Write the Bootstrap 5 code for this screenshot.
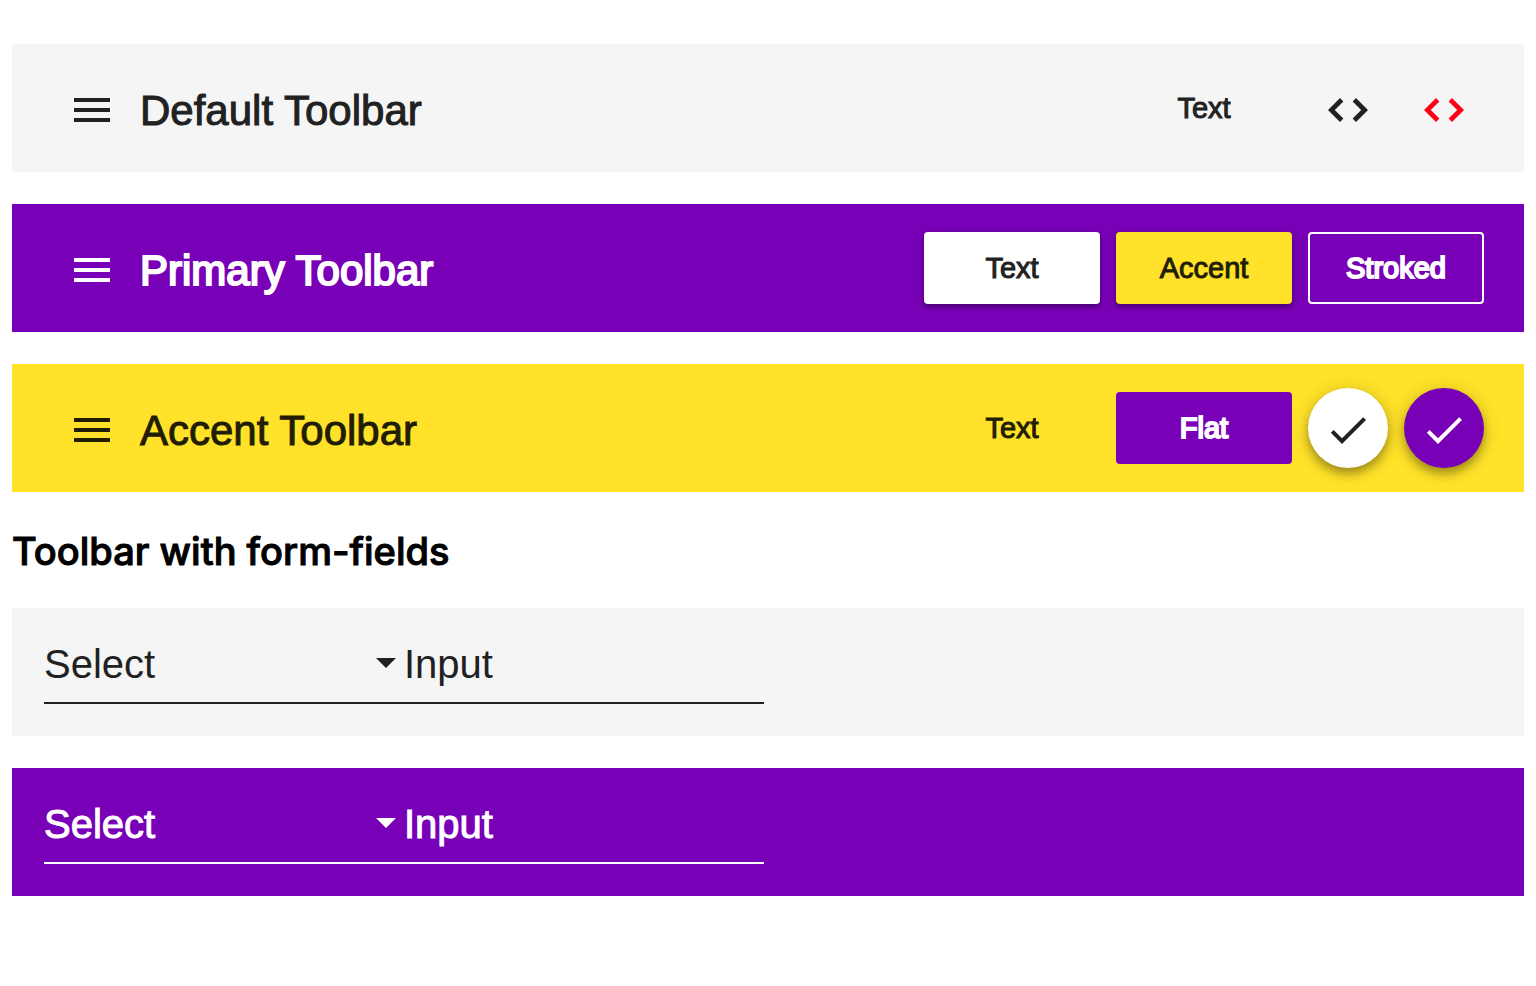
<!DOCTYPE html>
<html lang="en">
<head>
<meta charset="utf-8">
<meta name="viewport" content="width=device-width, initial-scale=1">
<title>Toolbars</title>
<link href="https://cdn.jsdelivr.net/npm/bootstrap@5.3.0/dist/css/bootstrap.min.css" rel="stylesheet">
<style>
  :root { --ink: #212121; --primary: #7800b6; --accent: #ffe229; --surface: #f5f5f5; }
  body { font-family: "Liberation Sans", Arial, sans-serif; background: #fff; color: var(--ink); }
  .page { padding-top: 44px; padding-bottom: 44px; }
  .toolbar { min-height: 128px; padding: 0 32px; color: var(--ink); background: var(--surface); }
  .toolbar-primary { background: var(--primary); color: #fff; }
  .toolbar-accent { background: var(--accent); color: #211d05; }
  .toolbar-stack { display: grid; gap: 32px; }
  .toolbar-title { font-size: 42px; line-height: 48px; font-weight: 400; margin: 6px 0 0; -webkit-text-stroke: 1px currentColor; }
  .tool-btn { min-width: 176px; height: 72px; padding: 0 32px; border-radius: 4px; border: 2px solid transparent;
    font-size: 29px; line-height: 40px; color: inherit; -webkit-text-stroke: 1px currentColor; }
  .tool-btn.raised { box-shadow: 0 3px 4px rgba(0,0,0,.3), 0 1px 8px rgba(0,0,0,.16); }
  .fill-white { background: #fff; color: var(--ink); }
  .fill-accent { background: var(--accent); color: #211d05; }
  .fill-primary { background: var(--primary); color: #fff; }
  .tool-btn.stroked { border-color: #fff; }
  .toolbar-primary .toolbar-title, .tool-btn.stroked, .tool-btn.fill-primary { -webkit-text-stroke-width: 2px; }
  .icon-btn { width: 80px; height: 80px; padding: 4px 0 0; border: 0; border-radius: 50%; color: inherit;
    display: inline-flex; align-items: center; justify-content: center; }
  .icon-btn svg { width: 48px; height: 48px; fill: currentColor; }
  .icon-btn.fill-white { color: var(--ink); }
  .icon-btn.fill-primary { color: #fff; }
  .icon-btn.warn { color: #ff0015; }
  .icon-btn.fab { box-shadow: 0 6px 10px rgba(0,0,0,.3), 0 2px 20px rgba(0,0,0,.14); }
  .section-title { font-family: Inter, "Liberation Sans", sans-serif; font-size: 38px; line-height: 48px; font-weight: 500; color: #000; margin: 35px 0 33px;
    -webkit-text-stroke: 1px currentColor; }
  .fields { width: 720px; border-bottom: 2px solid currentColor; }
  .field { height: 64px; border: 0; border-radius: 0; padding: 0 0 12px; background: none; color: inherit; font-size: 40px; line-height: 48px;
    width: 100%; appearance: none; outline-offset: 2px; }
  .field option { color: var(--ink); }
  .field::placeholder { color: inherit; opacity: 1; }
  .toolbar-primary .field { -webkit-text-stroke: 1px currentColor; }
  .toolbar-form { padding-bottom: 2px; }
  .select-arrow { right: 8px; top: 20px; width: 20px; height: 10px; fill: currentColor; pointer-events: none; }
</style>
</head>
<body>
<svg class="d-none" aria-hidden="true">
  <symbol id="menu" viewBox="0 0 24 24"><path d="M3 18h18v-2H3v2zm0-5h18v-2H3v2zm0-7v2h18V6H3z"/></symbol>
  <symbol id="code" viewBox="0 0 24 24"><path d="M9.7 16.3L5.4 12l4.3-4.3L8 6l-6 6 6 6 1.7-1.7zm4.6 0l4.3-4.3-4.3-4.3L16 6l6 6-6 6-1.7-1.7z"/></symbol>
  <symbol id="check" viewBox="0 0 24 24"><path d="M9 16.17L4.83 12l-1.42 1.41L9 19 21 7l-1.41-1.41z"/></symbol>
  <symbol id="arrow" viewBox="0 0 20 10"><path d="M0 0h20L10 10z"/></symbol>
</svg>
<main class="container-fluid page">
  <div class="toolbar-stack">
    <header class="toolbar d-flex align-items-center">
      <button type="button" class="btn icon-btn mx-2" aria-label="Menu"><svg><use href="#menu"/></svg></button>
      <h1 class="toolbar-title">Default Toolbar</h1>
      <div class="d-flex align-items-center gap-3 ms-auto me-2">
        <button type="button" class="btn tool-btn">Text</button>
        <button type="button" class="btn icon-btn" aria-label="Code"><svg><use href="#code"/></svg></button>
        <button type="button" class="btn icon-btn warn" aria-label="Code warning"><svg><use href="#code"/></svg></button>
      </div>
    </header>
    <header class="toolbar toolbar-primary d-flex align-items-center">
      <button type="button" class="btn icon-btn mx-2" aria-label="Menu"><svg><use href="#menu"/></svg></button>
      <h1 class="toolbar-title">Primary Toolbar</h1>
      <div class="d-flex align-items-center gap-3 ms-auto me-2">
        <button type="button" class="btn tool-btn raised fill-white">Text</button>
        <button type="button" class="btn tool-btn raised fill-accent">Accent</button>
        <button type="button" class="btn tool-btn stroked">Stroked</button>
      </div>
    </header>
    <header class="toolbar toolbar-accent d-flex align-items-center">
      <button type="button" class="btn icon-btn mx-2" aria-label="Menu"><svg><use href="#menu"/></svg></button>
      <h1 class="toolbar-title">Accent Toolbar</h1>
      <div class="d-flex align-items-center gap-3 ms-auto me-2">
        <button type="button" class="btn tool-btn">Text</button>
        <button type="button" class="btn tool-btn fill-primary">Flat</button>
        <button type="button" class="btn icon-btn fab fill-white" aria-label="Confirm"><svg><use href="#check"/></svg></button>
        <button type="button" class="btn icon-btn fab fill-primary" aria-label="Confirm primary"><svg><use href="#check"/></svg></button>
      </div>
    </header>
  </div>
  <h2 class="section-title">Toolbar with form-fields</h2>
  <div class="toolbar-stack">
    <form class="toolbar toolbar-form d-flex align-items-center">
      <div class="fields d-flex">
        <div class="w-50 position-relative d-flex align-items-center">
          <select class="field" aria-label="Select"><option>Select</option></select>
          <svg class="select-arrow position-absolute" aria-hidden="true"><use href="#arrow"/></svg>
        </div>
        <div class="w-50"><input type="text" class="field" placeholder="Input" aria-label="Input"></div>
      </div>
    </form>
    <form class="toolbar toolbar-form toolbar-primary d-flex align-items-center">
      <div class="fields d-flex">
        <div class="w-50 position-relative d-flex align-items-center">
          <select class="field" aria-label="Select"><option>Select</option></select>
          <svg class="select-arrow position-absolute" aria-hidden="true"><use href="#arrow"/></svg>
        </div>
        <div class="w-50"><input type="text" class="field" placeholder="Input" aria-label="Input"></div>
      </div>
    </form>
  </div>
</main>
<script src="https://cdn.jsdelivr.net/npm/bootstrap@5.3.0/dist/js/bootstrap.bundle.min.js"></script>
</body>
</html>
